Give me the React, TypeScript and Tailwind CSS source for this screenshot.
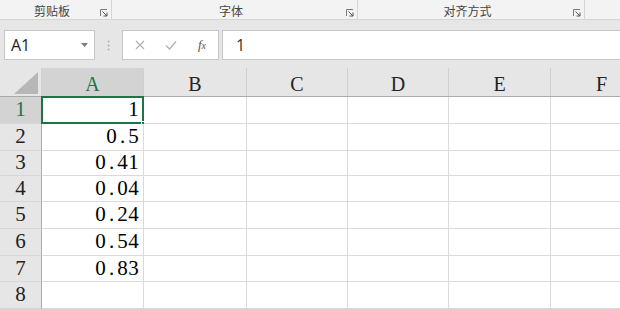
import React from "react";

const cols = ["A", "B", "C", "D", "E", "F"];
const colWidths = [102, 103, 101, 101, 102, 102];
const rowHeights = [27, 27, 25, 26, 27, 27, 26, 27];
const values: Record<number, string> = {
  1: "1",
  2: "0.5",
  3: "0.41",
  4: "0.04",
  5: "0.24",
  6: "0.54",
  7: "0.83",
};

// SimSun-like: every char takes the same advance
function Wide({ text }: { text: string }) {
  return (
    <span className="inline-flex">
      {text.split("").map((c, i) => (
        <span key={i} className="inline-block w-[11px] text-center">
          {c}
        </span>
      ))}
    </span>
  );
}

function Launcher() {
  return (
    <svg width="8" height="8" viewBox="0 0 8 8" className="shrink-0">
      <path d="M0.5 7V0.5H7" fill="none" stroke="#7a7a7a" strokeWidth="1" />
      <path d="M2.5 2.5L7 7M7 3.5V7H3.5" fill="none" stroke="#555" strokeWidth="1" />
    </svg>
  );
}

function Group({ label, width, last }: { label: string; width: number; last?: boolean }) {
  return (
    <div
      className={`flex h-full items-center ${last ? "" : "border-r border-[#d6d6d6]"}`}
      style={{ width }}
    >
      <div className="flex-1 pl-1 pt-[3px] text-center text-[12px] leading-none text-[#444]">{label}</div>
      <div className="w-[10px] pr-[3px] flex items-end h-full pb-[2px] mr-[1px]">
        <Launcher />
      </div>
    </div>
  );
}

export default function App() {
  return (
    <div
      className="w-[620px] h-[309px] overflow-hidden bg-[#e6e6e6]"
      style={{ fontFamily: '"Noto Sans CJK SC", "Open Sans", sans-serif' }}
    >
      {/* ribbon group labels */}
      <div className="flex h-[20px] bg-[#f3f3f3] border-b border-[#d5d5d5]">
        <Group label="剪贴板" width={112} />
        <Group label="字体" width={246} />
        <Group label="对齐方式" width={227} />
        <div className="flex-1" />
      </div>

      {/* formula bar */}
      <div className="flex h-[48px] items-start pt-[10px] pl-[4px]">
        <div className="flex h-[30px] w-[91px] items-center justify-between border border-[#c6c6c6] bg-white pl-[6px] pr-[6px]">
          <span className="text-[16px] text-[#222]" style={{ fontFamily: '"Open Sans", sans-serif' }}>
            A1
          </span>
          <svg width="7" height="4" viewBox="0 0 7 4">
            <path d="M0 0H7L3.5 4Z" fill="#7a7a7a" />
          </svg>
        </div>
        <div className="flex h-[30px] w-[27px] items-center justify-center">
          <svg width="3" height="11" viewBox="0 0 3 11">
            <circle cx="1.5" cy="1.5" r="1" fill="#b0b0b0" />
            <circle cx="1.5" cy="5.5" r="1" fill="#b0b0b0" />
            <circle cx="1.5" cy="9.5" r="1" fill="#b0b0b0" />
          </svg>
        </div>
        <div className="flex h-[30px] w-[97px] items-center border border-[#c6c6c6] bg-white">
          <div className="flex w-[32px] justify-center pl-[2px]">
            <svg width="10" height="10" viewBox="0 0 10 10">
              <path d="M1 1L9 9M9 1L1 9" stroke="#b4b4b4" strokeWidth="1.3" />
            </svg>
          </div>
          <div className="flex w-[32px] justify-center">
            <svg width="12" height="10" viewBox="0 0 12 10">
              <path d="M1 5.5L4.5 9L11 1.5" fill="none" stroke="#b4b4b4" strokeWidth="1.4" />
            </svg>
          </div>
          <div
            className="flex w-[30px] justify-center text-[13px] italic text-[#555]"
            style={{ fontFamily: '"Liberation Serif", serif' }}
          >
            <span>
              f<span className="text-[10px]">x</span>
            </span>
          </div>
        </div>
        <div className="ml-[3px] flex h-[30px] flex-1 items-center border border-r-0 border-[#c6c6c6] bg-white pl-[13px]">
          <span className="text-[16px] text-[#333]" style={{ fontFamily: '"Open Sans", sans-serif' }}>
            1
          </span>
        </div>
      </div>

      {/* sheet */}
      <div className="w-[620px] overflow-hidden" style={{ fontFamily: '"Liberation Serif", "DejaVu Serif", serif' }}>
        <div className="flex h-[29px] w-max border-b border-[#ababab]">
          <div className="relative w-[42px] shrink-0 border-r border-[#d0d0d0] bg-[#e6e6e6]">
            <svg width="24" height="22" viewBox="0 0 24 22" className="absolute bottom-[2px] right-[3px]">
              <path d="M24 0V22H0Z" fill="#b7b7b7" />
            </svg>
          </div>
          {cols.map((c, i) => (
            <div
              key={c}
              className={`flex shrink-0 items-center justify-center border-r border-[#d0d0d0] pt-[3px] text-[20px] ${
                i === 0 ? "bg-[#d3d3d3] text-[#217346]" : "bg-[#e6e6e6] text-[#222]"
              }`}
              style={{ width: colWidths[i] }}
            >
              {c}
            </div>
          ))}
        </div>
        {rowHeights.map((h, r) => {
          const row = r + 1;
          return (
            <div key={row} className="flex w-max" style={{ height: h }}>
              <div
                className={`flex w-[42px] shrink-0 items-center justify-center border-r border-b border-[#ababab] border-b-[#d6d6d6] text-[21px] ${
                  row === 1 ? "bg-[#d3d3d3] text-[#217346]" : "bg-[#e6e6e6] text-[#222]"
                }`}
              >
                {row}
              </div>
              {cols.map((c, i) => (
                <div
                  key={c}
                  className="relative flex shrink-0 items-center justify-end border-r border-b border-[#dadada] bg-white pr-[4px] text-[21px] text-black"
                  style={{ width: colWidths[i] }}
                >
                  {i === 0 && values[row] ? <Wide text={values[row]} /> : null}
                  {i === 0 && row === 1 ? (
                    <>
                      <div className="pointer-events-none absolute -left-[1px] -top-[1px] bottom-[-1px] right-[-1px] border-2 border-[#217346]" />
                      <div className="absolute -bottom-[3px] -right-[3px] h-[5px] w-[5px] border border-white bg-[#217346]" />
                    </>
                  ) : null}
                </div>
              ))}
            </div>
          );
        })}
      </div>
    </div>
  );
}
